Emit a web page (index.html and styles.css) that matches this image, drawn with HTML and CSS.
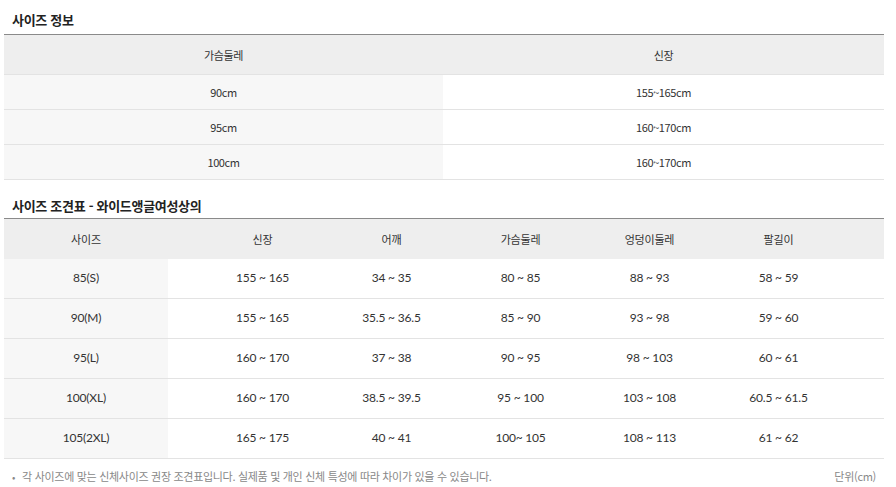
FILE: index.html
```html
<!DOCTYPE html>
<html lang="ko">
<head>
<meta charset="utf-8">
<link rel="stylesheet" href="styles.css">
</head>
<body>
<div class="page">
  <h2 class="title t1">사이즈 정보</h2>
  <div class="tbl info">
    <div class="row head"><div class="c first">가슴둘레</div><div class="c">신장</div></div>
    <div class="row"><div class="c first">90cm</div><div class="c">155~165cm</div></div>
    <div class="row"><div class="c first">95cm</div><div class="c">160~170cm</div></div>
    <div class="row"><div class="c first">100cm</div><div class="c">160~170cm</div></div>
  </div>

  <h2 class="title t2">사이즈 조견표 - 와이드앵글여성상의</h2>
  <div class="tbl chart">
    <div class="row head"><div class="c first">사이즈</div><div class="c second">신장</div><div class="c">어깨</div><div class="c">가슴둘레</div><div class="c">엉덩이둘레</div><div class="c">팔길이</div><div class="c"></div></div>
    <div class="row"><div class="c first">85(S)</div><div class="c second">155 ~ 165</div><div class="c">34 ~ 35</div><div class="c">80 ~ 85</div><div class="c">88 ~ 93</div><div class="c">58 ~ 59</div><div class="c"></div></div>
    <div class="row"><div class="c first">90(M)</div><div class="c second">155 ~ 165</div><div class="c">35.5 ~ 36.5</div><div class="c">85 ~ 90</div><div class="c">93 ~ 98</div><div class="c">59 ~ 60</div><div class="c"></div></div>
    <div class="row"><div class="c first">95(L)</div><div class="c second">160 ~ 170</div><div class="c">37 ~ 38</div><div class="c">90 ~ 95</div><div class="c">98 ~ 103</div><div class="c">60 ~ 61</div><div class="c"></div></div>
    <div class="row"><div class="c first">100(XL)</div><div class="c second">160 ~ 170</div><div class="c">38.5 ~ 39.5</div><div class="c">95 ~ 100</div><div class="c">103 ~ 108</div><div class="c">60.5 ~ 61.5</div><div class="c"></div></div>
    <div class="row"><div class="c first">105(2XL)</div><div class="c second">165 ~ 175</div><div class="c">40 ~ 41</div><div class="c">100~ 105</div><div class="c">108 ~ 113</div><div class="c">61 ~ 62</div><div class="c"></div></div>
  </div>
  <div class="foot">
    <p class="note"><span class="dot">•</span>각 사이즈에 맞는 신체사이즈 권장 조견표입니다. 실제품 및 개인 신체 특성에 따라 차이가 있을 수 있습니다.</p>
    <p class="unit">단위(cm)</p>
  </div>
</div>
</body>
</html>
```

FILE: styles.css
```css
html, body {
  margin: 0;
  padding: 0;
  background: #fff;
}
.page {
  width: 880px;
  padding-left: 4px;
  font-family: "Noto Sans CJK KR", "Noto Sans", sans-serif;
  color: #333;
}
.title {
  margin: 0;
  font-size: 13px;
  font-weight: bold;
  color: #222;
  padding-left: 8px;
  letter-spacing: -0.3px;
  line-height: 20px;
}
.t1 {
  padding-top: 10px;
  height: 24px;
}
.t2 {
  padding-top: 16px;
  height: 22px;
}
.tbl {
  border-top: 1px solid #8a8a8a;
}
.row {
  display: grid;
  border-bottom: 1px solid #e3e3e3;
}
.info .row {
  grid-template-columns: 439px 1fr;
  height: 34px;
}
.info .row.head {
  height: 39px;
}
.chart .row {
  grid-template-columns: 164px 159px 129px 129px 129px 129px 1fr;
  height: 39px;
}
.chart .row.head {
  height: 40px;
  border-bottom: none;
}
.c {
  display: flex;
  align-items: center;
  justify-content: center;
  font-size: 11px;
  letter-spacing: -0.4px;
}
.row .first {
  background: #f7f7f7;
}
.row.head, .row.head .first {
  background: #eeeeee;
}
.chart .c {
  font-family: "Lato", "Noto Sans CJK KR", sans-serif;
  font-size: 12px;
  letter-spacing: -0.2px;
  padding-bottom: 2px;
}
.chart .second {
  padding-left: 30px;
}
.chart .head .c {
  font-family: "Noto Sans CJK KR", sans-serif;
  font-size: 11px;
  padding-bottom: 0;
}
.foot {
  display: flex;
  justify-content: space-between;
  padding: 9px 8px 0 8px;
  font-size: 11px;
  color: #888;
  letter-spacing: -0.3px;
}
.foot p {
  margin: 0;
  line-height: 16px;
}
.dot {
  margin-right: 7px;
  font-size: 10px;
}
```
